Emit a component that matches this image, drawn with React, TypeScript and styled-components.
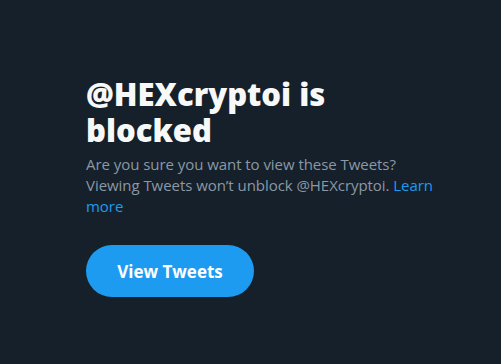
import React from "react";
import styled, { createGlobalStyle } from "styled-components";

const Global = createGlobalStyle`
  html, body { margin: 0; padding: 0; background: #15202b; }
  body { font-family: "Open Sans", "Liberation Sans", sans-serif; }
`;

const Page = styled.main`
  width: 501px;
  height: 364px;
  background: #15202b;
  box-sizing: border-box;
  padding: 76px 0 0 86px;
`;

const Panel = styled.section`
  width: 360px;
  display: flex;
  flex-direction: column;
  align-items: flex-start;
`;

const Title = styled.h1`
  margin: 0;
  font-size: 31px;
  line-height: 36px;
  font-weight: 800;
  color: #f7f9f9;
  width: 260px;
`;

const Message = styled.p`
  margin: 6px 0 0;
  font-size: 15px;
  line-height: 21px;
  letter-spacing: -0.05px;
  color: #8b98a5;
`;

const Link = styled.a`
  color: #1d9bf0;
  text-decoration: none;
`;

const Button = styled.button`
  margin-top: 28px;
  height: 52px;
  width: 168px;
  border: none;
  border-radius: 26px;
  background: #1d9bf0;
  color: #ffffff;
  font-family: inherit;
  font-size: 17px;
  font-weight: 700;
  cursor: pointer;
`;

export default function App() {
  return (
    <>
      <Global />
      <Page>
        <Panel>
          <Title>@HEXcryptoi is blocked</Title>
          <Message>
            Are you sure you want to view these Tweets? Viewing Tweets won’t unblock @HEXcryptoi.{" "}
            <Link href="#">Learn more</Link>
          </Message>
          <Button>View Tweets</Button>
        </Panel>
      </Page>
    </>
  );
}
